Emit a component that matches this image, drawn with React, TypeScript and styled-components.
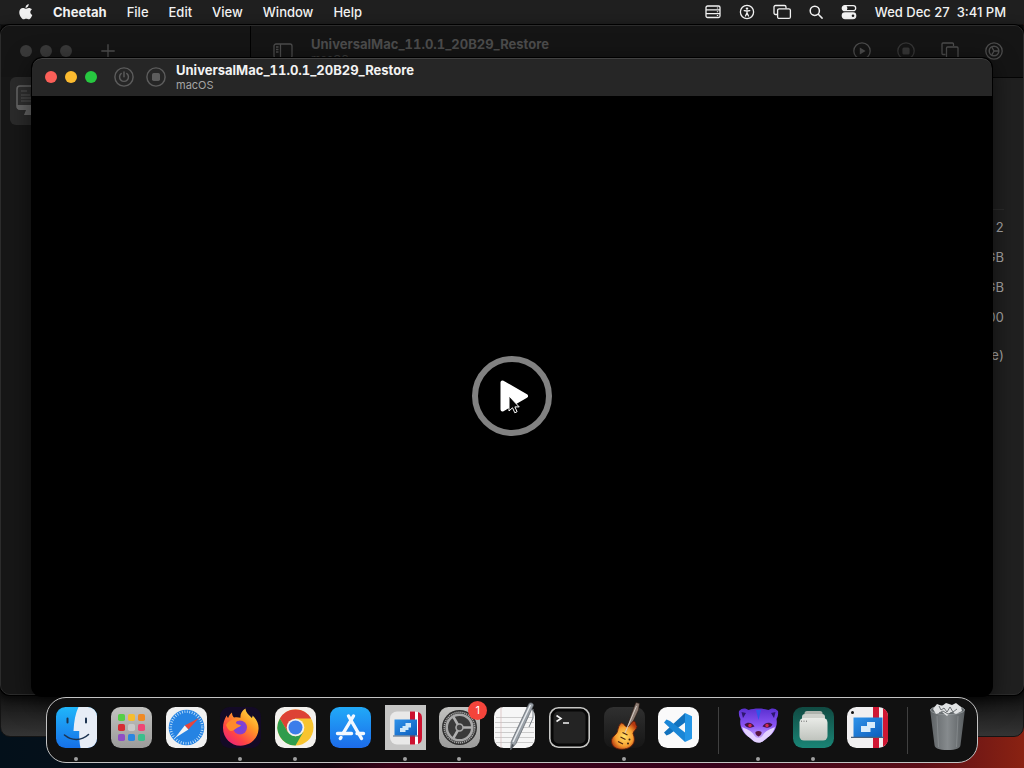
import React from 'react';
import styled, { createGlobalStyle } from 'styled-components';

const GlobalStyle = createGlobalStyle`
  *, *::before, *::after { box-sizing: border-box; }
  body { margin: 0; background: #000; overflow: hidden; }
  button { font: inherit; color: inherit; background: none; border: 0; padding: 0; }
  svg { display: block; overflow: visible; flex: none; }
`;

const Desktop = styled.div`
  position: relative;
  display: flex;
  flex-direction: column;
  height: 100vh;
  overflow: hidden;
  font-family: Inter, "Liberation Sans", sans-serif;
  font-size: 13px;
  color: #f2f2f2;
  background: linear-gradient(90deg, #03101a 0%, #07101a 12%, #14060f 32%, #3a0319 38%, #38031c 70%, #5c0f18 90%, #8a2212 100%);
`;

/* ---------- menu bar ---------- */

const MenuBar = styled.header`
  display: flex;
  align-items: center;
  justify-content: space-between;
  height: 24px;
  padding: 0 18px 1px 19px;
  background: #1f1f1f;
  font-weight: 500;
  line-height: 16px;
`;

const Menus = styled.nav`
  display: flex;
  align-items: center;
  gap: 20px;
`;

const MenuItem = styled.button<{ $bold?: boolean }>`
  font-weight: ${p => (p.$bold ? 700 : 500)};
  white-space: nowrap;
`;

const StatusArea = styled.div<{ $gap: number }>`
  display: flex;
  align-items: center;
  gap: ${p => p.$gap}px;
`;

const Clock = styled.time`
  white-space: pre;
`;

/* ---------- windows ---------- */

const RearWindow = styled.section`
  position: absolute;
  inset: 24px 0 31px 0;
  border-radius: 0 0 10px 10px;
  border: 1px solid #141414;
  background: linear-gradient(180deg, #0c0c0c 93%, #343434 100%);
`;

const LibraryWindow = styled.section`
  position: absolute;
  inset: 25px 0 73px 0;
  display: flex;
  border-radius: 10px;
  border: 1px solid #2c2c2c;
  background: #202020;
  box-shadow: 0 0 0 1px #000, 0 3px 12px rgba(0, 0, 0, 0.7);
  overflow: hidden;
`;

const Sidebar = styled.aside`
  width: 250px;
  flex: none;
  background: #171717;
  border-right: 1px solid #000;
`;

const SidebarBar = styled.div`
  display: flex;
  align-items: center;
  height: 51px;
  padding: 0 0 2px 19px;
  gap: 29px;
  background: #151515;
  color: #505050;
`;

const Lights = styled.div`
  display: flex;
  gap: 8px;
`;

const Light = styled.button<{ $color: string }>`
  width: 12px;
  height: 12px;
  border-radius: 50%;
  background: ${p => p.$color};
`;

const MachineRow = styled.button`
  display: flex;
  align-items: center;
  width: 230px;
  height: 48px;
  margin-left: 9px;
  padding-left: 6px;
  border-radius: 6px;
  background: #2b2b2b;
`;

const Detail = styled.div`
  flex: 1;
  display: flex;
  flex-direction: column;
`;

const DetailBar = styled.div`
  display: flex;
  align-items: center;
  justify-content: space-between;
  height: 52px;
  padding: 0 20px 2px 22px;
  background: #151515;
  border-bottom: 1px solid #050505;
  color: #4c4c4c;
`;

const BarGroup = styled.div<{ $gap: number }>`
  display: flex;
  align-items: center;
  gap: ${p => p.$gap}px;
`;

const Titles = styled.div`
  display: flex;
  flex-direction: column;
`;

const Title = styled.h1`
  margin: 0;
  font-size: 13px;
  line-height: 16px;
  font-weight: 700;
  font-variant-numeric: tabular-nums;
  white-space: nowrap;
`;

const Subtitle = styled.span`
  font-size: 11px;
  line-height: 14px;
  color: #a4a4a4;
`;

const DimSubtitle = styled(Subtitle)`
  color: #3a3a3a;
`;

const Specs = styled.dl`
  margin: 131px 19px 0 20px;
  padding-top: 2px;
  border-top: 1px solid #2c2c2c;
  color: #adadad;
  font-variant-numeric: tabular-nums;
`;

const Spec = styled.div<{ $last?: boolean }>`
  display: flex;
  justify-content: space-between;
  align-items: center;
  height: 30px;
  margin-top: ${p => (p.$last ? 8 : 0)}px;
  dd { margin: 0; }
`;

const MachineWindow = styled.main`
  position: absolute;
  inset: 58px 32px 72px 32px;
  display: flex;
  flex-direction: column;
  border-radius: 10px;
  background: #000;
  box-shadow: 0 0 0 1px #000, 0 6px 26px rgba(0, 0, 0, 0.6);
  overflow: hidden;
`;

const MachineBar = styled.div`
  display: flex;
  align-items: center;
  height: 38px;
  padding: 0 0 1px 13px;
  background: #262626;
  border-top: 1px solid #424242;
  border-radius: 10px 10px 0 0;
`;

const Controls = styled.div`
  display: flex;
  gap: 12px;
  margin: 0 10px 0 17px;
  color: #5c5c5c;
`;

const Screen = styled.div`
  flex: 1;
  display: flex;
  align-items: center;
  justify-content: center;
`;

const PlayButton = styled.button`
  width: 80px;
  height: 80px;
  border: 6px solid #818181;
  border-radius: 50%;
  display: flex;
  align-items: center;
  justify-content: center;
`;

/* ---------- dock ---------- */

const Dock = styled.nav`
  position: absolute;
  left: 46px;
  right: 46px;
  bottom: 5px;
  height: 66px;
  display: flex;
  align-items: center;
  justify-content: space-between;
  padding: 0 9px;
  border: 1px solid #c4c4c4;
  border-radius: 20px;
  background: #111;
`;

const DockItem = styled.button<{ $running?: boolean }>`
  position: relative;
  width: 41px;
  height: 64px;
  padding-bottom: 6px;
  display: flex;
  align-items: center;
  &::after {
    content: '';
    display: ${p => (p.$running ? 'block' : 'none')};
    position: absolute;
    left: 18px;
    bottom: 1px;
    width: 4px;
    height: 4px;
    border-radius: 50%;
    background: #a0a0a0;
  }
`;

const Badge = styled.span`
  position: absolute;
  top: 3px;
  right: -7px;
  width: 19px;
  height: 19px;
  border-radius: 50%;
  background: #f4443b;
  color: #fff;
  font-size: 11px;
  line-height: 19px;
  text-align: center;
`;

const Divider = styled.span`
  width: 1px;
  height: 47px;
  margin: 0 5px;
  background: #404040;
`;

/* ---------- drawings ---------- */

const line = { fill: 'none', stroke: 'currentColor', strokeWidth: 1.3 } as const;

const AppleMark = () => (
  <svg width="14" height="16" viewBox="0 0 14 16" fill="#f0f0f0">
    <path d="M9.7.1c.1 1.1-.3 2-.9 2.700C8.200 3.500 7.400 4 6.600 3.900c-.1-1 .3-2 .9-2.600C8.100.6 9 .2 9.700.1zM12.900 5.400c-1.100.7-1.600 1.600-1.600 2.700 0 1.300.8 2.400 2 2.900-.3.900-.7 1.700-1.200 2.400-.7 1-1.300 1.900-2.300 1.900s-1.400-.6-2.600-.6-1.600.6-2.600.6c-1 0-1.700-.9-2.400-1.900C.9 11.800.1 9.500.3 7.700.5 5.400 2.100 4 3.800 4c1.100 0 2 .7 2.800.7.7 0 1.800-.8 3.200-.8 1.200 0 2.400.5 3.100 1.500z" />
  </svg>
);

const StackIcon = () => (
  <svg width="16" height="14" viewBox="0 0 16 14" {...line}>
    <rect x="1" y="1" width="14" height="11.500" rx="1.500" />
    <path d="M1 4.800h14M1 8.700h14M12.500 2.500v1M12.500 6.200v1M12.500 10v1" />
  </svg>
);

const AccessIcon = () => (
  <svg width="16" height="16" viewBox="0 0 16 16" {...line}>
    <circle cx="8" cy="8" r="6.600" />
    <circle cx="8" cy="4.600" r="1.200" fill="currentColor" stroke="none" />
    <path d="M5.200 6.600L8 7l2.800-.4M8 7v2.200M6.500 12L8 8.800 9.500 12" strokeLinecap="round" strokeWidth="1.300" />
  </svg>
);

const ScreensIcon = () => (
  <svg width="18" height="16" viewBox="0 0 18 16" {...line}>
    <path d="M4 10.500H2.500A1.500 1.500 0 0 1 1 9V3a1.500 1.500 0 0 1 1.500-1.500h9A1.500 1.500 0 0 1 13 3v1.500" />
    <rect x="4.600" y="4.800" width="12.800" height="9.600" rx="1.500" />
  </svg>
);

const SearchIcon = () => (
  <svg width="14" height="14" viewBox="0 0 14 14" {...line} strokeWidth="1.500">
    <circle cx="5.800" cy="5.800" r="4.600" />
    <path d="M9.300 9.300l3.800 3.800" strokeLinecap="round" />
  </svg>
);

const ControlIcon = () => (
  <svg width="16" height="14" viewBox="0 0 16 14" {...line}>
    <rect x="1.300" y=".7" width="13.400" height="5" rx="2.500" />
    <circle cx="4" cy="3.200" r="1.800" fill="currentColor" />
    <rect x="1.300" y="8" width="13.400" height="5.500" rx="2.700" fill="currentColor" />
    <circle cx="12" cy="10.750" r="1.300" fill="#1f1f1f" stroke="none" />
  </svg>
);

const PlusIcon = () => (
  <svg width="14" height="14" viewBox="0 0 14 14" {...line}>
    <path d="M7 .3v13.400M.3 7h13.400" />
  </svg>
);

const SidebarIcon = () => (
  <svg width="20" height="16" viewBox="0 0 20 16" {...line}>
    <rect x="1" y="1" width="18" height="14" rx="2" />
    <path d="M7.500 1v14M3 4h2.500M3 6.500h2.500M3 9h2.500" />
  </svg>
);

type RingKind = 'play' | 'stop' | 'power' | 'gear';

const Ringed = ({ kind, size = 18, dim = false }: { kind: RingKind; size?: number; dim?: boolean }) => (
  <svg width={size} height={size} viewBox="0 0 18 18" {...line} strokeWidth={1.3} opacity={dim ? 0.6 : 1}>
    <circle cx="9" cy="9" r="8.200" />
    {kind === 'play' && <path d="M6.800 5.600v6.800l5.800-3.400z" fill="currentColor" stroke="none" />}
    {kind === 'stop' && <rect x="5.400" y="5.400" width="7.200" height="7.200" rx="1.500" fill="currentColor" stroke="none" />}
    {kind === 'power' && <path d="M9 4.500v4.300M6.500 5.800a4 4 0 1 0 5 0" strokeLinecap="round" />}
    {kind === 'gear' && (
      <>
        <circle cx="9" cy="9" r="4.800" strokeWidth="1.500" />
        <path d="M9 9h4.500M9 9L6.800 5.200M9 9l-2.200 3.800" />
      </>
    )}
  </svg>
);

const CopiesIcon = () => (
  <svg width="18" height="18" viewBox="0 0 18 18" {...line}>
    <path d="M4.500 12.500H2a1 1 0 0 1-1-1V2a1 1 0 0 1 1-1h9.500a1 1 0 0 1 1 1v2" />
    <rect x="5.500" y="5" width="11.500" height="12" rx="1" />
  </svg>
);

const MonitorIcon = () => (
  <svg width="36" height="32" viewBox="0 0 36 32">
    <rect x="1" y="1" width="34" height="23" rx="3" fill="#303030" stroke="#666" strokeWidth="1.600" />
    <path d="M1 20h34v2a3 3 0 0 1-3 3H4a3 3 0 0 1-3-3z" fill="#666" />
    <path d="M5 6h6M5 10h9M5 13h16M5 16h12" stroke="#555" />
    <path d="M10 25h14l2 5H8z" fill="#666" />
  </svg>
);

const PlayPointer = () => (
  <svg width="68" height="68" viewBox="0 0 68 68">
    <path d="M24.500 20.500v27L48 34z" fill="#fff" stroke="#fff" strokeWidth="4" strokeLinejoin="round" />
    <path d="M31 34v15l3.500-3.200 2.300 5 2.300-1.100-2.200-4.800h4.300z" fill="#050505" stroke="#fff" strokeWidth="1" />
  </svg>
);

const Tile = ({ fill, children }: { fill: string; children?: React.ReactNode }) => (
  <svg width="41" height="41" viewBox="0 0 41 41">
    <rect width="41" height="41" rx="9.500" fill={fill} />
    {children}
  </svg>
);

const HiddenDefs = styled.svg`
  position: absolute;
`;

const Gradients = () => (
  <HiddenDefs width="0" height="0" aria-hidden="true">
    <defs>
      <linearGradient id="finder" x2="0" y2="1"><stop stopColor="#20b6fa" /><stop offset="1" stopColor="#1670e8" /></linearGradient>
      <linearGradient id="silver" x2="0" y2="1"><stop stopColor="#c2c2c0" /><stop offset="1" stopColor="#9b9b9a" /></linearGradient>
      <linearGradient id="store" x2="0" y2="1"><stop stopColor="#21aaf8" /><stop offset="1" stopColor="#1c6bea" /></linearGradient>
      <linearGradient id="fox" x1="1" y1="0" x2=".2" y2="1"><stop stopColor="#fff04d" /><stop offset=".4" stopColor="#ff9a26" /><stop offset=".75" stopColor="#ff4345" /><stop offset="1" stopColor="#e8227c" /></linearGradient>
      <radialGradient id="globe"><stop stopColor="#6a45e8" /><stop offset="1" stopColor="#8f3fc7" /></radialGradient>
      <linearGradient id="laptop" x2="1" y2="1"><stop stopColor="#2f93ea" /><stop offset="1" stopColor="#0c5dbc" /></linearGradient>
      <radialGradient id="guitar" cx=".5" cy=".55" r=".55"><stop stopColor="#ffe066" /><stop offset=".6" stopColor="#f7a032" /><stop offset="1" stopColor="#b5380f" /></radialGradient>
      <linearGradient id="slate" x2="0" y2="1"><stop stopColor="#303030" /><stop offset="1" stopColor="#161616" /></linearGradient>
      <linearGradient id="face" x2="0" y2="1"><stop stopColor="#5a2fd0" /><stop offset=".5" stopColor="#8b55f5" /><stop offset="1" stopColor="#d8c4ff" /></linearGradient>
      <linearGradient id="teal" x2="0" y2="1"><stop stopColor="#104a42" /><stop offset="1" stopColor="#1a8576" /></linearGradient>
      <linearGradient id="jar" x2="0" y2="1"><stop stopColor="#e9ebe7" /><stop offset="1" stopColor="#bfc3bd" /></linearGradient>
      <linearGradient id="bin" x2="1" y2="0"><stop stopColor="#666b6e" /><stop offset=".5" stopColor="#93989b" /><stop offset="1" stopColor="#606568" /></linearGradient>
    </defs>
  </HiddenDefs>
);

const FinderArt = () => (
  <Tile fill="url(#finder)">
    <path d="M22.500 0H31.500A9.500 9.500 0 0 1 41 9.500v22A9.500 9.500 0 0 1 31.500 41H24.500c-1-5-1.500-10-1.300-17H17.500C18 14 19.500 6 22.500 0z" fill="#e7edf6" />
    <path d="M11.500 11.500v4M30 11.500v4" stroke="#1c3350" strokeWidth="2" strokeLinecap="round" />
    <path d="M8.500 28c7 6 17 6 24-.5" fill="none" stroke="#1c3350" strokeWidth="1.600" strokeLinecap="round" />
  </Tile>
);

const padColors = ['#55cf46', '#f5bd2e', '#ef8a24', '#d62c34', '#c9c9c9', '#ef4675', '#8f4fc4', '#2a86e0', '#3abf8c'];

const LaunchpadArt = () => (
  <Tile fill="url(#silver)">
    {padColors.map((c, i) => (
      <rect key={c} x={7 + (i % 3) * 10} y={7 + Math.floor(i / 3) * 10} width="7" height="7" rx="1.800" fill={c} />
    ))}
  </Tile>
);

const SafariArt = () => (
  <Tile fill="#f1f1f1">
    <circle cx="20.500" cy="20.500" r="17.800" fill="#2583e3" />
    <circle cx="20.500" cy="20.500" r="15.800" fill="none" stroke="#c9e5fb" strokeWidth="2.600" strokeDasharray=".8 1.680" />
    <path d="M33 11L18.700 18.600l3.700 3.800z" fill="#e8453c" />
    <path d="M9 31l9.700-12.400 3.700 3.800z" fill="#f4f4f4" />
  </Tile>
);

const FirefoxArt = () => (
  <Tile fill="#130a26">
    <path d="M3 21c0-5 1.300-8.500 3.600-12.600.4 1.200.8 2 1.500 2.700C9 8.500 10.500 6.500 12 5.500c0 2 .6 3.600 2 5 2.500-.6 4.800-.3 6.500.3C20 7 22 3.500 25.500 1.500c.3 4.500 3.500 6 6.300 9.500.6-1 .8-1.500.8-2.500C37 12.500 39 17 38.500 22.500 37.800 32 30 38.800 20.500 38.800S3 31 3 21z" fill="url(#fox)" />
    <circle cx="20" cy="20.500" r="7" fill="url(#globe)" />
    <path d="M6 18c3-6 9-7 13.500-4.600-3.500.2-4.500 1.800-2.500 3.600 2 1 3 .6 4 1.200-.8 1.800-3 2-4.500 3C13.500 23 10 28 6 18z" fill="#ff8a2b" />
  </Tile>
);

const ChromeArt = () => (
  <Tile fill="#f3f1ee">
    <circle cx="20.500" cy="20.500" r="18" fill="#f8c42f" />
    <path d="M20.500 11.500h15.600a18 18 0 0 0-31.200 0l7.800 13.500z" fill="#dd4235" />
    <path d="M12.700 25l7.800 4.500 7.800-4.500-7.800 13.500A18 18 0 0 1 4.900 11.500z" fill="#2f9c4c" />
    <circle cx="20.500" cy="20.500" r="8.800" fill="#f3f1ee" />
    <circle cx="20.500" cy="20.500" r="7" fill="#3b7dea" />
  </Tile>
);

const AppStoreArt = () => (
  <Tile fill="url(#store)">
    <g stroke="#f2f8ff" strokeWidth="3.400" strokeLinecap="round">
      <path d="M23.500 9L13 26.500M18.500 9l13 22.500M11 30.500l-.7 1" />
      <path d="M7.500 26.500h14M27 26.500h6.500" />
    </g>
  </Tile>
);

const PreviewArt = () => (
  <svg width="41" height="41" viewBox="0 0 41 41">
    <rect x="0" y="-2" width="41" height="45" fill="#c5c5c4" />
    <rect x="5" y="4.500" width="32" height="33" rx="7" fill="#e9e9e8" />
    <path d="M25 4.500h5v33h-5zM33 5c3 1 4 3 4 6v20c0 3-1 5-4 6z" fill="#cc1230" />
    <path d="M30 5h3v32h-3z" fill="#fff" />
    <path d="M9.500 12.500h22.500v16H9.500z" fill="url(#laptop)" />
    <path d="M8 28.500h25v1H8z" fill="#46607e" />
    <path d="M20.500 16h5.500v4.500h-2.500V23h-3v2H15v-4h2.500v-2h3z" fill="#cfe8f9" />
  </svg>
);

const SettingsArt = () => (
  <Tile fill="url(#silver)">
    <circle cx="20.500" cy="20.500" r="17.500" fill="#303030" />
    <circle cx="20.500" cy="20.500" r="15.200" fill="none" stroke="#a8a8a8" strokeWidth="1.600" strokeDasharray="1.200 .8" />
    <circle cx="20.500" cy="20.500" r="12.800" fill="#3a3a3a" stroke="#a8a8a8" strokeWidth="2.600" />
    <path d="M20.500 20.500h12M20.500 20.500l-6-10.400M20.500 20.500l-6 10.400" stroke="#b0b0b0" strokeWidth="2.600" />
    <circle cx="20.500" cy="20.500" r="3.500" fill="#444" stroke="#a8a8a8" strokeWidth="1.600" />
  </Tile>
);

const TextEditArt = () => (
  <Tile fill="#f6f6f6">
    <path d="M2 10.500h37M1 15.500h39M1 20.500h39M1 25.500h39M1 30.500h39M2 35.500h37" stroke="#c2c2c2" strokeWidth=".8" />
    <path d="M7 0v41" stroke="#d6b7b7" strokeWidth=".7" />
    <path d="M35-3.500c2-1.500 5 0 4.300 2.200L22 36.500 16.500 43l.8-8.500z" fill="#9aa1a8" stroke="#5b6269" strokeWidth=".7" />
    <path d="M36.500-2L19 35" stroke="#e9ecef" strokeWidth="1.400" />
    <path d="M39 2v9l-4 9" fill="none" stroke="#7a828a" strokeWidth="1" />
    <path d="M18 37l2 1-3.500 5z" fill="#4a4f55" />
  </Tile>
);

const TerminalArt = () => (
  <Tile fill="#c6c6c4">
    <rect x="1.600" y="1.600" width="37.800" height="37.800" rx="8" fill="#070707" />
    <rect x="4.500" y="4.500" width="32" height="32" rx="5" fill="#232323" />
    <path d="M7.500 8.500l4.500 3-4.500 3M14 16h6" fill="none" stroke="#f2f2f2" strokeWidth="1.600" />
  </Tile>
);

const GarageArt = () => (
  <Tile fill="url(#slate)">
    <path d="M30.500-1l1.500-3.500 3.500 1L34.500 3 25.500 22l-3-1.500z" fill="#8d7d74" stroke="#2c1a12" strokeWidth=".6" />
    <path d="M17.500 16c2.500-.5 3 4 6 4 3-.5 3-5 6.500-6 2 .5 1.500 4 3 5.500-.5 3.500-3.500 4-4 7 1.500 4 2.500 8-1 12-4 4-11 4.500-15 3C9 40 7.500 37 7.500 34c0-4.500 4.500-5.500 6-9.500.5-3 1.500-7.500 4-8.500z" fill="url(#guitar)" stroke="#5d1c0a" strokeWidth=".9" />
    <path d="M32.500-1L21 26" stroke="#d3cbc4" strokeWidth="1" />
    <path d="M18.500 25.500l5 2.500M16.500 30l5 2.500M14 34.500l5 2.500" stroke="#4a220f" strokeWidth="1.200" />
    <circle cx="25.500" cy="32.500" r="1" fill="#352010" />
    <circle cx="24" cy="36.500" r="1" fill="#352010" />
  </Tile>
);

const CodeArt = () => (
  <Tile fill="#fafafa">
    <path d="M27 6L6 25.500l2.500 3L12 27l15-11.500z" fill="#1272bd" />
    <path d="M27 35L6 15.500l2.500-3L12 14l15 11.500z" fill="#1a86d6" />
    <path d="M27 6l7 3.300v22.400L27 35z" fill="#2596e6" />
  </Tile>
);

const FaceArt = () => (
  <svg width="41" height="41" viewBox="0 0 41 41">
    <path d="M1 4c3-3.500 7-3 9.500-1 6-2 14-2 20 0 2.500-2 6.500-2.500 9.500 1 .5 4-.5 6-1.500 8 1.500 8-3 15-9 18.500-3 3-5 5-9 5s-6-2-9-5C5.500 27 1 20 2.500 12 1.500 10 .5 8 1 4z" fill="url(#face)" />
    <path d="M3.500 5l4.500 1-3 5zM37.500 5L33 6l3 5z" fill="#2d176f" />
    <path d="M18 3l2.500 10L23 3z" fill="#2f56e8" />
    <path d="M4 20c4 2 9 3 12 8 2 4 7 4 9 0 3-5 8-6 12-8-2 6-5 9-9 11.500-3 2.500-4.500 4-7.500 4s-4.500-1.500-7.500-4C9 29 6 26 4 20z" fill="#e3d2ff" />
    <path d="M6.500 17.500c3-3 8-2 10 2-4 2-8 1.500-10-2zM34.500 17.500c-3-3-8-2-10 2 4 2 8 1.500 10-2z" fill="#431347" />
    <circle cx="12" cy="18.500" r="1.700" fill="#d22954" />
    <circle cx="29" cy="18.500" r="1.700" fill="#d22954" />
    <path d="M17.500 25c1.500-1.500 4.500-1.500 6 0 .5 2-1.500 4-3 4.500-1.500-.5-3.500-2.500-3-4.500z" fill="#57143f" />
  </svg>
);

const StackArt = () => (
  <Tile fill="url(#teal)">
    <rect x="11.500" y="4" width="18" height="10" rx="2.500" fill="#aeb3ad" />
    <rect x="9" y="7" width="23" height="10" rx="3" fill="#cdd0cb" />
    <rect x="6.500" y="11" width="28" height="22.500" rx="4.500" fill="url(#jar)" />
    <path d="M8 14.200h6" stroke="#666" strokeWidth="1" strokeDasharray="1 1.500" />
  </Tile>
);

const CheetahArt = () => (
  <Tile fill="#f0eff0">
    <path d="M26 0h6v41h-6zM36 1.200c3.500 1.500 5 4.500 5 8.300v22c0 4-1.500 6.500-5 8.300z" fill="#cf1733" />
    <path d="M6.500 10.500h29V30h-29z" fill="url(#laptop)" />
    <path d="M4 29.800h33V31H4z" fill="#46607e" />
    <path d="M20 15h8v6h-4.500v4H14v-6h6z" fill="#d8ecfb" />
    <circle cx="5.500" cy="5.500" r="1.500" fill="#111" />
  </Tile>
);

const TrashArt = () => (
  <svg width="41" height="41" viewBox="0 0 41 41">
    <path d="M3 2h35l-4.500 36c-.5 3.500-4 5-13 5s-12.500-1.500-13-5z" fill="url(#bin)" opacity=".9" />
    <path d="M10 9l1.500 31M31 9l-1.500 31" stroke="#a4a9ab" strokeWidth=".4" />
    <ellipse cx="20.500" cy="3" rx="17" ry="4.500" fill="#5b6063" stroke="#9ba0a2" strokeWidth=".8" />
    <path d="M6 2l4-5 5 2 4-3 6 2 4-2 5 4 1 4-6 3-5-2-4 4-5-4-6 2z" fill="#e0e2e3" />
    <path d="M12-1l2 4 3-2 3 4 3-5 3 5 4-3M12 6l4-2 5 3 6-2" fill="none" stroke="#5d6265" strokeWidth=".9" />
  </svg>
);

type App = { name: string; art: () => React.JSX.Element; running?: boolean; badge?: string };

const pinned: App[] = [
  { name: 'Finder', art: FinderArt, running: true },
  { name: 'Launchpad', art: LaunchpadArt },
  { name: 'Safari', art: SafariArt },
  { name: 'Firefox', art: FirefoxArt, running: true },
  { name: 'Chrome', art: ChromeArt, running: true },
  { name: 'App Store', art: AppStoreArt },
  { name: 'Preview', art: PreviewArt, running: true },
  { name: 'System Settings', art: SettingsArt, running: true, badge: '1' },
  { name: 'TextEdit', art: TextEditArt },
  { name: 'Terminal', art: TerminalArt },
  { name: 'GarageBand', art: GarageArt, running: true },
  { name: 'Visual Studio Code', art: CodeArt },
];

const recent: App[] = [
  { name: 'Ferret', art: FaceArt, running: true },
  { name: 'Containers', art: StackArt, running: true },
  { name: 'Cheetah', art: CheetahArt },
];

const DockApp = ({ app }: { app: App }) => (
  <DockItem $running={app.running} aria-label={app.name}>
    <app.art />
    {app.badge && <Badge>{app.badge}</Badge>}
  </DockItem>
);

const specs = [
  ['CPU', '2'],
  ['Memory', '4 GB'],
  ['Disk', '64 GB'],
  ['Display', '1920 x 1200'],
  ['Network', 'NAT (Bridge)'],
];

export default function App() {
  return (
    <Desktop>
      <GlobalStyle />
      <Gradients />
      <MenuBar>
        <Menus>
          <MenuItem aria-label="Apple"><AppleMark /></MenuItem>
          <MenuItem $bold>Cheetah</MenuItem>
          {['File', 'Edit', 'View', 'Window', 'Help'].map(m => <MenuItem key={m}>{m}</MenuItem>)}
        </Menus>
        <StatusArea $gap={18}>
          <StatusArea $gap={18}>
            <StackIcon />
            <AccessIcon />
            <ScreensIcon />
            <SearchIcon />
            <ControlIcon />
          </StatusArea>
          <Clock>Wed Dec 27  3:41 PM</Clock>
        </StatusArea>
      </MenuBar>

      <RearWindow />

      <LibraryWindow>
        <Sidebar>
          <SidebarBar>
            <Lights>
              {['Close', 'Minimize', 'Zoom'].map(n => <Light key={n} $color="#3a3a3a" aria-label={n} />)}
            </Lights>
            <PlusIcon />
          </SidebarBar>
          <MachineRow aria-label="Virtual machine"><MonitorIcon /></MachineRow>
        </Sidebar>
        <Detail>
          <DetailBar>
            <BarGroup $gap={18}>
              <SidebarIcon />
              <Titles>
                <Title>UniversalMac_11.0.1_20B29_Restore</Title>
                <DimSubtitle>macOS</DimSubtitle>
              </Titles>
            </BarGroup>
            <BarGroup $gap={26}>
              <Ringed kind="play" />
              <Ringed kind="stop" dim />
              <CopiesIcon />
              <Ringed kind="gear" />
            </BarGroup>
          </DetailBar>
          <Specs>
            {specs.map(([k, v], i) => (
              <Spec key={k} $last={i === specs.length - 1}><dt>{k}</dt><dd>{v}</dd></Spec>
            ))}
          </Specs>
        </Detail>
      </LibraryWindow>

      <MachineWindow>
        <MachineBar>
          <Lights>
            <Light $color="#fb5f58" aria-label="Close" />
            <Light $color="#fcbb2f" aria-label="Minimize" />
            <Light $color="#27c840" aria-label="Zoom" />
          </Lights>
          <Controls>
            <Ringed kind="power" size={20} />
            <Ringed kind="stop" size={20} />
          </Controls>
          <Titles>
            <Title>UniversalMac_11.0.1_20B29_Restore</Title>
            <Subtitle>macOS</Subtitle>
          </Titles>
        </MachineBar>
        <Screen>
          <PlayButton aria-label="Start"><PlayPointer /></PlayButton>
        </Screen>
      </MachineWindow>

      <Dock aria-label="Dock">
        {pinned.map(a => <DockApp key={a.name} app={a} />)}
        <Divider />
        {recent.map(a => <DockApp key={a.name} app={a} />)}
        <Divider />
        <DockItem aria-label="Trash"><TrashArt /></DockItem>
      </Dock>
    </Desktop>
  );
}
